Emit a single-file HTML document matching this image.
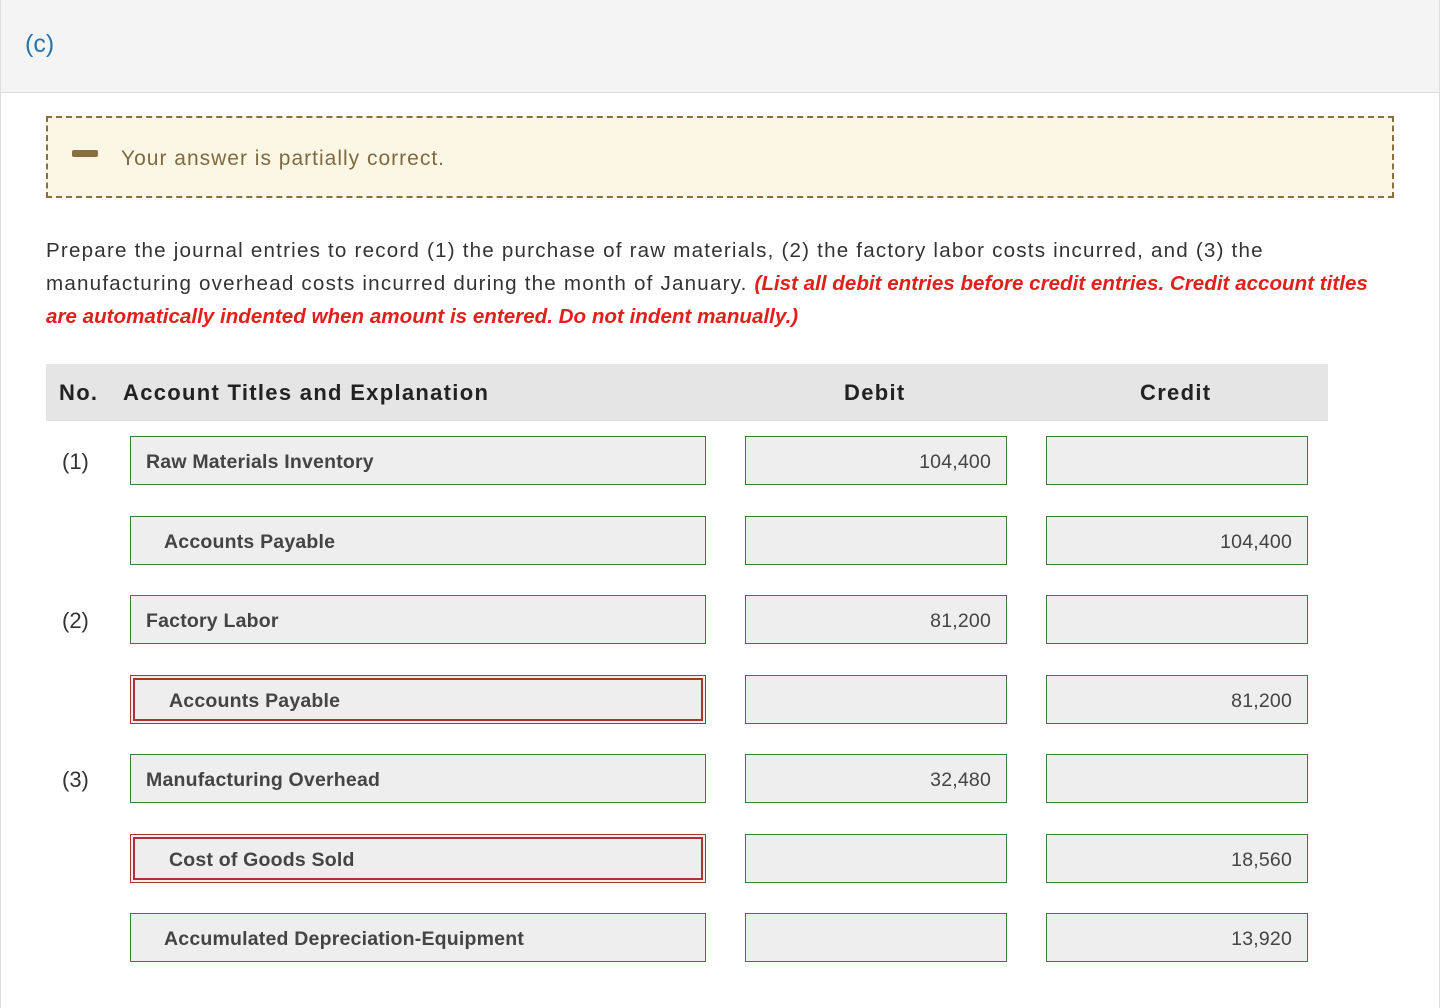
<!DOCTYPE html>
<html><head><style>
body{margin:0;width:1446px;height:1008px;background:#fff;font-family:"Liberation Sans",sans-serif;position:relative;overflow:hidden}
.hdr{position:absolute;left:0;top:0;width:1439px;height:92px;background:#f4f4f4;border-bottom:1px solid #ddd;border-left:1px solid #ddd}
.hdr span{position:absolute;left:24px;top:30px;color:#2a74a9;font-size:25px}
.rb{position:absolute;left:1439px;top:0;width:1px;height:1008px;background:#ddd}
.lb{position:absolute;left:0;top:0;width:1px;height:1008px;background:#ddd}
.msg{position:absolute;left:46px;top:116px;width:1348px;height:82px;background:#fbf7e4;border:2px dashed #8a7040;box-sizing:border-box}
.msg i{position:absolute;left:24px;top:32px;width:26px;height:7px;background:#8a7040;border-radius:2px}
.msg span{position:absolute;left:73px;top:29px;color:#7f6a40;font-size:21px;letter-spacing:1px}
.p{position:absolute;left:46px;top:234px;font-size:20.6px;line-height:33px;color:#333;white-space:nowrap;letter-spacing:1.2px}
.p b{color:#e0201b;font-style:italic;font-weight:bold;letter-spacing:0}
.th{position:absolute;left:46px;top:364px;width:1282px;height:57px;background:#e5e5e5;font-weight:bold;font-size:22px;color:#222;letter-spacing:1.3px}
.th span{position:absolute;top:16px}
.box{position:absolute;height:49px;box-sizing:border-box;border:1px solid #3f7a3f;background:#eee;font-size:19.5px;color:#444;line-height:50px;letter-spacing:0.2px}
.a{left:130px;width:576px;padding-left:15px;font-weight:bold}
.a.i{padding-left:33px}
.d{left:745px;width:262px;text-align:right;padding-right:15px}
.c{left:1046px;width:262px;text-align:right;padding-right:15px}
.red{border-color:#a33;box-shadow:inset 0 0 0 2px #eee,inset 0 0 0 4px #a33;padding-left:38px}
.n{position:absolute;left:62px;font-size:22px;color:#333}
</style></head><body>
<div class="hdr"><span>(c)</span></div>
<div class="lb"></div><div class="rb"></div>
<div class="msg"><i></i><span>Your answer is partially correct.</span></div>
<div class="p">Prepare the journal entries to record (1) the purchase of raw materials, (2) the factory labor costs incurred, and (3) the<br>manufacturing overhead costs incurred during the month of January. <b>(List all debit entries before credit entries. Credit account titles</b><br><b>are automatically indented when amount is entered. Do not indent manually.)</b></div>
<div class="th"><span style="left:13px">No.</span><span style="left:77px">Account Titles and Explanation</span><span style="left:798px">Debit</span><span style="left:1094px">Credit</span></div>

<div class="n" style="top:449px">(1)</div>
<div class="box a" style="top:436px">Raw Materials Inventory</div>
<div class="box d" style="top:436px">104,400</div>
<div class="box c" style="top:436px"></div>

<div class="box a i" style="top:516px">Accounts Payable</div>
<div class="box d" style="top:516px"></div>
<div class="box c" style="top:516px">104,400</div>

<div class="n" style="top:608px">(2)</div>
<div class="box a" style="top:595px">Factory Labor</div>
<div class="box d" style="top:595px">81,200</div>
<div class="box c" style="top:595px"></div>

<div class="box a red" style="top:675px">Accounts Payable</div>
<div class="box d" style="top:675px"></div>
<div class="box c" style="top:675px">81,200</div>

<div class="n" style="top:767px">(3)</div>
<div class="box a" style="top:754px">Manufacturing Overhead</div>
<div class="box d" style="top:754px">32,480</div>
<div class="box c" style="top:754px"></div>

<div class="box a red" style="top:834px">Cost of Goods Sold</div>
<div class="box d" style="top:834px"></div>
<div class="box c" style="top:834px">18,560</div>

<div class="box a i" style="top:913px">Accumulated Depreciation-Equipment</div>
<div class="box d" style="top:913px"></div>
<div class="box c" style="top:913px">13,920</div>
</body></html>
